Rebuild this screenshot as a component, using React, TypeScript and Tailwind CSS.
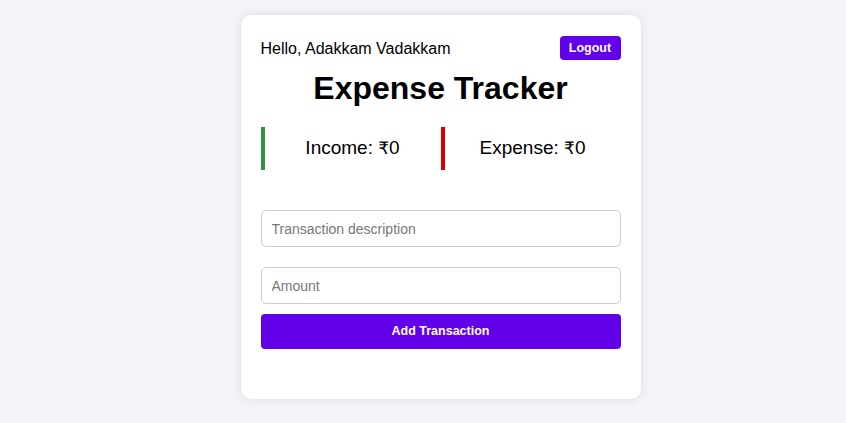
import React from "react";

export default function App() {
  return (
    <div
      className="min-h-[423px] w-full bg-[#f4f4f8] flex justify-center pt-[15px] pl-[35px]"
      style={{ fontFamily: '"Liberation Sans", Arial, "DejaVu Sans", sans-serif' }}
    >
      <div className="w-[400px] h-[384px] bg-white rounded-[10px] shadow-[0_0_10px_rgba(0,0,0,0.1)] px-5 pt-5 flex flex-col">
        <div className="flex items-center justify-between h-[25px]">
          <span className="text-[16px] text-black mt-[2px]">Hello, Adakkam Vadakkam</span>
          <button className="bg-[#6200ea] text-white text-[12.5px] font-bold rounded-[4px] h-[24px] leading-[24px] w-[61px]">
            Logout
          </button>
        </div>
        <h1 className="text-[32px] font-bold text-center text-black leading-[37px] mt-[10px]">
          Expense Tracker
        </h1>
        <div className="flex mt-[20px] h-[43px]">
          <div className="flex-1 border-l-4 border-[#388e3c] flex items-center justify-center text-[19px] text-black">
            <span>Income: <span style={{ fontFamily: '"DejaVu Sans", "Noto Sans", sans-serif' }} className="text-[17px]">₹</span>0</span>
          </div>
          <div className="flex-1 border-l-4 border-[#d50000] flex items-center justify-center text-[19px] text-black">
            <span>Expense: <span style={{ fontFamily: '"DejaVu Sans", "Noto Sans", sans-serif' }} className="text-[17px]">₹</span>0</span>
          </div>
        </div>
        <input
          placeholder="Transaction description"
          className="mt-[40px] h-[37px] w-full border border-[#ccc] rounded-[5px] px-[10px] text-[14px] placeholder:text-[#777] outline-none"
        />
        <input
          placeholder="Amount"
          className="mt-[20px] h-[37px] w-full border border-[#ccc] rounded-[5px] px-[10px] text-[14px] placeholder:text-[#777] outline-none"
        />
        <button className="mt-[10px] h-[35px] w-full bg-[#6200ea] text-white text-[12.5px] font-bold rounded-[4px]">
          Add Transaction
        </button>
      </div>
    </div>
  );
}
